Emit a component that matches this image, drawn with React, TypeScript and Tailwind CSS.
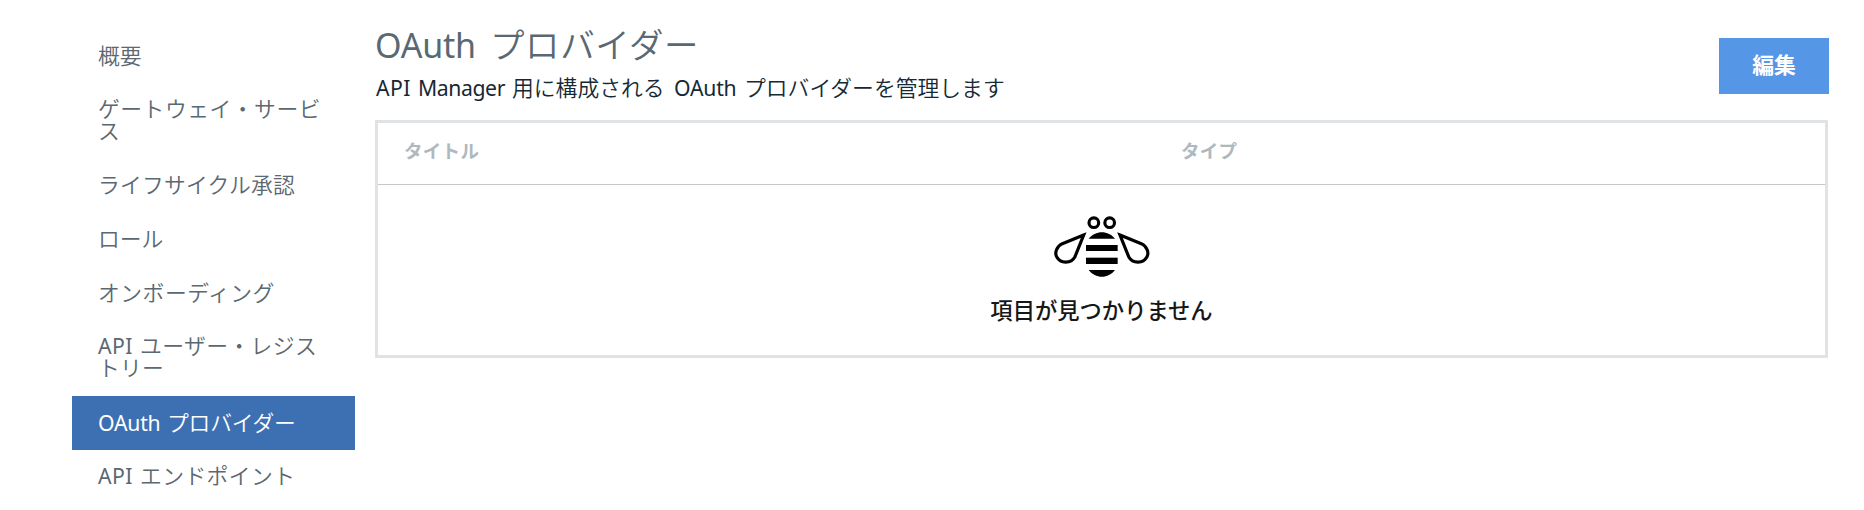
type Run = { text: string; className?: string };
type NavItem = { lines: Run[][]; active?: boolean };

const navItems: NavItem[] = [
  { lines: [[{ text: "概要" }]] },
  { lines: [[{ text: "ゲートウェイ・サービ", className: "tracking-[0.5px]" }], [{ text: "ス" }]] },
  { lines: [[{ text: "ライフサイクル承認", className: "tracking-[0.2px]" }]] },
  { lines: [[{ text: "ロール" }]] },
  { lines: [[{ text: "オンボーディング", className: "tracking-[0.5px]" }]] },
  {
    lines: [
      [
        { text: "API", className: "w-[42px] text-[21.2px] font-normal tracking-[0.4px]" },
        { text: "ユーザー・レジス", className: "tracking-[0.4px]" },
      ],
      [{ text: "トリー", className: "tracking-[0.2px]" }],
    ],
  },
  {
    lines: [
      [
        { text: "OAuth", className: "w-[69px] text-[21.2px] font-normal tracking-[-0.2px]" },
        { text: "プロバイダー", className: "tracking-[-0.2px]" },
      ],
    ],
    active: true,
  },
  {
    lines: [
      [
        { text: "API", className: "w-[42px] text-[21.2px] font-normal tracking-[0.4px]" },
        { text: "エンドポイント", className: "tracking-[0.4px]" },
      ],
    ],
  },
];

function Runs({ runs }: { runs: Run[] }) {
  return (
    <span className="flex items-baseline whitespace-nowrap">
      {runs.map((run) => (
        <span key={run.text} className={run.className}>
          {run.text}
        </span>
      ))}
    </span>
  );
}

function Bee() {
  return (
    <svg className="h-[62px] w-24" viewBox="41 33 288 186" fill="none">
      <g stroke="#000" strokeWidth="9.500">
        <circle cx="160.500" cy="53" r="14.500" />
        <circle cx="208" cy="53" r="14.500" />
        <path d="M130 90 L66 116 C48 124 42 145 50 157 C60 176 92 177 104 155 Z" />
        <path d="M239 90 L303 116 C321 124 327 145 319 157 C309 176 277 177 265 155 Z" />
      </g>
      <g fill="#000">
        <path d="M145 101 C165 75 204 75 224 101 Z" />
        <path d="M137 120 H232 V138 H137 Z" />
        <path d="M137 158 H232 V177 H137 Z" />
        <path d="M145 195 H224 C204 222 165 222 145 195 Z" />
      </g>
    </svg>
  );
}

export default function App() {
  return (
    <div className="flex h-[510px] w-[1864px] overflow-hidden bg-white pl-[72px] font-['Noto_Sans','Noto_Sans_CJK_JP',sans-serif]">
      <nav className="w-[283px] shrink-0 pt-[30px] text-[21.8px] leading-[22px] font-[350] text-[#5a6872]">
        {navItems.map((item, index) => (
          <a
            key={index}
            className={
              item.active
                ? "flex h-[54px] flex-col justify-center bg-[#3d70b2] pl-[26px] text-white"
                : item.lines.length > 1
                  ? "flex h-[75px] flex-col justify-center pb-[3px] pl-[26px]"
                  : "flex h-[54px] flex-col justify-center pb-[2px] pl-[26px]"
            }
          >
            {item.lines.map((runs, line) => (
              <Runs key={line} runs={runs} />
            ))}
          </a>
        ))}
      </nav>

      <main className="ml-5 w-[1454px] pt-[20px]">
        <header className="flex h-[100px] justify-between">
          <div className="pt-px">
            <h1 className="text-[34.5px] leading-[48px] font-[350] text-[#5a6872]">
              <Runs
                runs={[
                  { text: "OAuth", className: "w-[115px] text-[34px] font-normal tracking-[-0.2px]" },
                  { text: "プロバイダー", className: "tracking-[0.6px]" },
                ]}
              />
            </h1>
            <p className="mt-[3px] pl-px text-[21.8px] leading-8 font-[350] text-[#152935]">
              <Runs
                runs={[
                  { text: "API", className: "w-[42px] text-[21.2px] font-normal tracking-[0.4px]" },
                  { text: "Manager", className: "w-[94px] text-[21.2px] font-normal tracking-[-0.4px]" },
                  { text: "用に構成される", className: "w-[162px]" },
                  { text: "OAuth", className: "w-[70px] text-[21.2px] font-normal tracking-[-0.2px]" },
                  { text: "プロバイダーを管理します" },
                ]}
              />
            </p>
          </div>
          <button className="mt-[18px] flex h-14 w-[110px] items-center justify-center bg-[#5596e6] pb-0.5 text-[21.8px] leading-none font-bold text-white">
            編集
          </button>
        </header>

        <section className="h-[238px] w-[1453px] border-[3px] border-[#dfe3e6]">
          <div className="flex h-[62px] items-center border-b border-[#c4c6c8] pb-[4px] pl-[26px] text-[18.5px] leading-none font-bold tracking-[0.3px] text-[#aeb8be]">
            <span className="w-[777px]">タイトル</span>
            <span>タイプ</span>
          </div>
          <div className="flex flex-col items-center pt-[31px]">
            <Bee />
            <p className="mt-[17px] text-[22.3px] leading-8 font-medium text-[#171717]">
              項目が見つかりません
            </p>
          </div>
        </section>
      </main>
    </div>
  );
}
